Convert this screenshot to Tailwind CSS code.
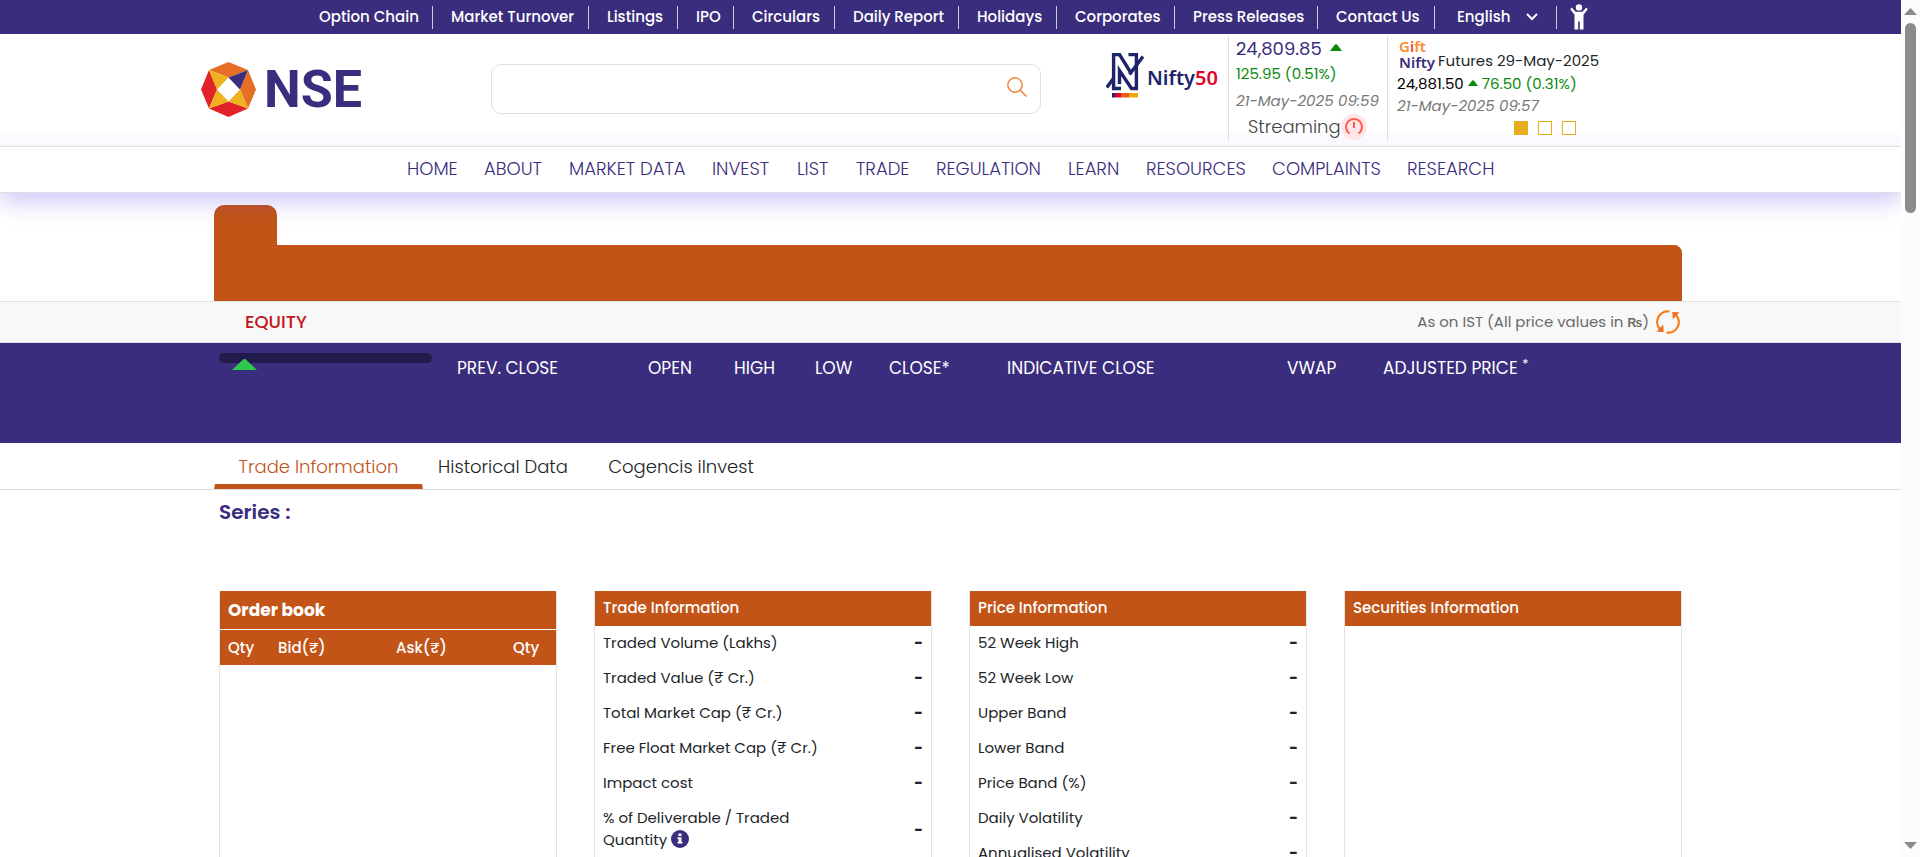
<!DOCTYPE html>
<html lang="en">
<head>
<meta charset="utf-8">
<title>NSE - Equity Quote</title>
<script src="https://cdn.jsdelivr.net/npm/@tailwindcss/browser@4"></script>
</head>
<body class="flex h-screen overflow-hidden bg-white font-['Poppins','Inter','Noto_Sans',sans-serif] text-[15px] text-[#212529]">

<div class="flex min-w-0 flex-1 flex-col overflow-hidden">

  <!-- Utility bar -->
  <div class="flex h-[34px] shrink-0 items-center bg-[#3a2d7d] pl-[319px] font-medium text-white">
    <nav aria-label="Quick links" class="grid grid-cols-[132px_156px_89px_56px_101px_124px_98px_118px_143px_117px] whitespace-nowrap leading-[22px]">
      <a href="#" class="mr-[18px] border-r border-[#d0cde0] pb-px">Option Chain</a>
      <a href="#" class="mr-[18px] border-r border-[#d0cde0] pb-px">Market Turnover</a>
      <a href="#" class="mr-[18px] border-r border-[#d0cde0] pb-px">Listings</a>
      <a href="#" class="mr-[18px] border-r border-[#d0cde0] pb-px">IPO</a>
      <a href="#" class="mr-[18px] border-r border-[#d0cde0] pb-px">Circulars</a>
      <a href="#" class="mr-[18px] border-r border-[#d0cde0] pb-px">Daily Report</a>
      <a href="#" class="mr-[18px] border-r border-[#d0cde0] pb-px">Holidays</a>
      <a href="#" class="mr-[18px] border-r border-[#d0cde0] pb-px">Corporates</a>
      <a href="#" class="mr-[18px] border-r border-[#d0cde0] pb-px">Press Releases</a>
      <a href="#" class="mr-[18px] border-r border-[#d0cde0] pb-px">Contact Us</a>
    </nav>
    <div class="ml-1 flex h-[23px] w-[100px] items-center border-r border-[#d0cde0]">
      <select aria-label="Language" class="w-[69px] appearance-none bg-transparent pb-px leading-[22px] text-white"><option>English</option></select>
      <svg class="pointer-events-none" width="12" height="8" viewBox="0 0 12 8" fill="none" stroke="#fff" stroke-width="2"><path d="M1 1l5 5 5-5"/></svg>
    </div>
    <button aria-label="Accessibility" class="ml-[13px]">
      <svg width="18" height="26" viewBox="0 0 18 26" fill="#fff"><circle cx="9" cy="3.400" r="3.200"/><path d="M1.600 3.600l4 4.200h6.800l4-4.200 1.300 1.600-4.200 5.600v14.800H9.800v-8H8.200v8H4.500V10.800L.3 5.200z"/></svg>
    </button>
  </div>

  <!-- Masthead -->
  <header class="relative shrink-0">
    <div class="relative z-10 flex h-28 items-start bg-gradient-to-b from-white from-85% to-[#f7f7fd] pl-[201px]">
      <a href="#" aria-label="NSE home" class="mt-7 flex w-[290px] items-center gap-2">
        <svg width="55" height="55" viewBox="0 0 55 55">
          <path fill="#e66f25" d="M27.500 0L47 8 27.500 15.500 8 8z"/>
          <path fill="#e66f25" d="M47 8l8 19.500L47 46.500l-8-19z"/>
          <path fill="#e12229" d="M8 46.500L27.500 39.500 47 46.500 27.500 55z"/>
          <path fill="#e12229" d="M8 8l8 19.500-8 19L0 27.500z"/>
          <path fill="#efb11f" d="M8 8l19.500 7.500L16 27.500z"/>
          <path fill="#efb11f" d="M16 27.500l11.500 12L8 46.500z"/>
          <path fill="#efb11f" d="M39 27.500l8 19-19.500-7z"/>
          <path fill="#3a2d7d" d="M47 8l-8 19.500-11.500-12z"/>
        </svg>
        <span class="font-['Roboto',sans-serif] text-[52px] font-bold leading-[55px] text-[#3a2d7d]">NSE</span>
      </a>

      <form role="search" class="mt-[30px] flex h-[50px] w-[550px] items-center rounded-[10px] border border-[#e0e0e0] bg-white">
        <input type="search" aria-label="Search" class="h-full min-w-0 flex-1 bg-transparent px-4 outline-none">
        <button type="button" aria-label="Search" class="mr-[13px] mb-1">
          <svg width="20" height="20" viewBox="0 0 20 20" fill="none" stroke="#ef7d33" stroke-width="1.400"><circle cx="8" cy="8" r="7.200"/><path d="M13.200 13.200l6.300 6.300"/></svg>
        </button>
      </form>

      <a href="#" class="ml-[65px] mt-[19px] flex w-[122px] gap-[3px]">
        <svg width="38" height="45" viewBox="0 0 38 45">
          <g fill="none" stroke="#20246b" stroke-width="3.400">
            <path d="M15 35.500H7.600V1.600H13.500L25 20"/>
            <path d="M22.500 1.600H30.400V35.500H25.500L13.500 17.500V31"/>
            <path d="M.8 34.500l7-9.500"/>
            <path d="M23.500 21.500L37 3.500"/>
          </g>
          <path fill="#20246b" d="M6 40h3v4.500H6z"/><path fill="#e2062c" d="M9 40h6v4.500H9z"/><path fill="#ea5b1c" d="M15 40h8v4.500h-8z"/><path fill="#f7a60a" d="M23 40h9v4.500h-9z"/>
        </svg>
        <span class="mt-[11px] font-['Noto_Sans',sans-serif] text-xl font-semibold text-[#20246b]">Nifty<span class="text-[#e2062c]">50</span></span>
      </a>

      <div class="mt-0.5 flex h-[104px] w-[160px] flex-col border-x border-[#dedede] pl-[7px]">
        <div class="flex items-center gap-2 text-lg leading-[26px] text-[#3a2d7d]">24,809.85
          <svg class="mb-1" width="12" height="7" viewBox="0 0 12 7" fill="#0a8a0a"><path d="M0 7L4.500 1q1.500-1.500 3 0L12 7z"/></svg>
        </div>
        <div class="text-[15px] leading-6 text-[#0a8a0a]">125.95 (0.51%)</div>
        <div class="mt-0.5 whitespace-nowrap text-[15px] leading-[26px] text-[#777] italic">21-May-2025 09:59</div>
        <div class="flex h-[26px] items-center pl-3 text-lg font-light text-[#444]">Streaming
          <button aria-label="Stop streaming">
            <svg width="26" height="26" viewBox="0 0 26 26"><circle cx="13" cy="13" r="13" fill="#ffe5e5"/><g fill="none" stroke="#fb5a50" stroke-width="2"><path d="M8.500 19.500a8 8 0 1 1 9 0"/><path d="M13 8v6"/></g></svg>
          </button>
        </div>
      </div>

      <div class="mt-1 pl-[9px] whitespace-nowrap">
        <div class="flex items-end gap-[3px] pl-0.5">
          <span class="font-['Noto_Sans',sans-serif] text-[15px] leading-4 font-semibold"><span class="block text-[#fb8c2d]">G<span class="text-[#ef4c2f]">i</span>ft</span><span class="block text-[#3a2d7d]">Nifty</span></span>
          <span class="text-[15px] leading-[18px]">Futures 29-May-2025</span>
        </div>
        <div class="mt-[3px] flex items-center gap-1 text-[15px] leading-[22px] text-black">24,881.50
          <svg class="mb-0.5" width="10" height="6" viewBox="0 0 12 7" fill="#0a8a0a"><path d="M0 7L4.500 1q1.500-1.500 3 0L12 7z"/></svg>
          <span class="text-[#0a8a0a]">76.50 (0.31%)</span>
        </div>
        <div class="text-[15px] leading-[22px] text-[#777] italic">21-May-2025 09:57</div>
        <div class="mt-1 flex gap-2.5 pl-[117px]">
          <button aria-label="Slide 1" class="size-3.5 border border-[#e8ad1e] bg-[#e8ad1e]"></button>
          <button aria-label="Slide 2" class="size-3.5 border border-[#e8ad1e]"></button>
          <button aria-label="Slide 3" class="size-3.5 border border-[#e8ad1e]"></button>
        </div>
      </div>
    </div>

    <nav aria-label="Main" class="grid grid-cols-[77px_85px_143px_85px_59px_80px_132px_78px_126px_135px_auto] border-y border-[#dedee4] bg-white pb-[2px] pl-[407px] text-lg leading-[43px] font-light whitespace-nowrap text-[#3a2d7d] shadow-[0_8px_25px_rgba(87,60,230,0.3)]">
      <a href="#">HOME</a><a href="#">ABOUT</a><a href="#">MARKET DATA</a><a href="#">INVEST</a><a href="#">LIST</a><a href="#">TRADE</a><a href="#">REGULATION</a><a href="#">LEARN</a><a href="#">RESOURCES</a><a href="#">COMPLAINTS</a><a href="#">RESEARCH</a>
    </nav>
  </header>

  <main class="shrink-0">
    <!-- Quote folder -->
    <div class="pt-3 pr-[219px] pl-[214px]">
      <div class="h-10 w-[63px] rounded-t-[10px] bg-[#c25417]"></div>
      <div class="h-14 rounded-tr-[8px] bg-[#c25417]"></div>
    </div>

    <div class="flex h-[42px] items-center border-y border-[#e2e2e2] bg-[#f8f8f8] pr-[221px] pl-[245px]">
      <h1 class="flex-1 text-lg font-medium text-[#c4161c]">EQUITY</h1>
      <span class="text-[15px] text-[#6a6a6a]">As on IST (All price values in <span class="font-['Liberation_Sans',sans-serif] text-xs font-bold">₨</span>)</span>
      <button aria-label="Refresh" class="ml-[7px]">
        <svg width="24" height="24" viewBox="0 0 24 24"><g fill="none" stroke="#fb7a12" stroke-width="2.200"><path d="M13.500 1.500A10.500 10.500 0 0 0 4.500 19.500"/><path d="M10.500 22.500A10.500 10.500 0 0 0 19.500 4.500"/></g><path fill="#f07020" d="M.5 21.800L7.700 22 7.200 14.500z"/><path fill="#f07020" d="M23.500 2.200L16.300 2l.5 7.500z"/></svg>
      </button>
    </div>

    <div class="flex h-[100px] items-start bg-[#3a2d7d] pt-2.5 pl-[219px]">
      <div class="w-[238px]">
        <div class="h-2.5 w-[213px] rounded-full bg-[#231a4c]">
          <svg class="relative top-1.5 left-[13px]" width="25" height="11" viewBox="0 0 25 11" fill="#2dc84d"><path d="M0 11L10.500 1q2-2 4 0L25 11z"/></svg>
        </div>
      </div>
      <table class="table-fixed text-left text-[17px] leading-[30px] whitespace-nowrap text-white">
        <colgroup><col class="w-[191px]"><col class="w-[86px]"><col class="w-[81px]"><col class="w-[74px]"><col class="w-[118px]"><col class="w-[280px]"><col class="w-[96px]"><col class="w-[180px]"></colgroup>
        <thead><tr>
          <th class="font-normal">PREV. CLOSE</th><th class="font-normal">OPEN</th><th class="font-normal">HIGH</th><th class="font-normal">LOW</th><th class="font-normal">CLOSE*</th><th class="font-normal">INDICATIVE CLOSE</th><th class="font-normal">VWAP</th><th class="font-normal">ADJUSTED PRICE <sup>*</sup></th>
        </tr></thead>
      </table>
    </div>

    <div role="tablist" class="flex h-[47px] items-stretch border-b border-[#dedede] pl-[214px] text-lg font-light text-[#222]">
      <button role="tab" aria-selected="true" class="flex w-[209px] flex-col items-center text-[#c25417]">
        <span class="flex-1 pt-3 leading-6">Trade Information</span>
        <svg class="h-[5px] w-full" viewBox="0 0 209 5" preserveAspectRatio="none" fill="#c25417"><path d="M1 0H208L209 5H0z"/></svg>
      </button>
      <button role="tab" aria-selected="false" class="flex w-[160px] justify-center pt-3 leading-6">Historical Data</button>
      <button role="tab" aria-selected="false" class="flex w-[196px] justify-center pt-3 leading-6">Cogencis iInvest</button>
    </div>

    <h2 class="pt-[7px] pl-[219px] text-xl leading-[30px] font-semibold text-[#3a2d7d]">Series :</h2>

    <div class="mt-16 grid grid-cols-4 gap-[37px] pr-[219px] pl-[219px]">
      <section class="min-h-[340px] rounded-t border border-t-0 border-[#e2e2e2]">
        <h3 class="border-b border-white bg-[#c25417] px-2 text-[17px] leading-[38px] font-bold text-white">Order book</h3>
        <table class="w-full table-fixed bg-[#c25417] text-left leading-[35px] text-white">
          <colgroup><col class="w-[50px]"><col class="w-[118px]"><col class="w-[117px]"><col></colgroup>
          <thead><tr><th class="pl-2 font-medium">Qty</th><th class="pl-2 font-medium">Bid(₹)</th><th class="pl-2 font-medium">Ask(₹)</th><th class="pl-2 font-medium">Qty</th></tr></thead>
        </table>
      </section>

      <section class="border border-t-0 border-[#e2e2e2]">
        <h3 class="bg-[#c25417] px-2 pb-px leading-[34px] font-medium text-white">Trade Information</h3>
        <table class="w-full text-left leading-[22px]">
          <tbody>
            <tr class="h-[35px]"><th class="w-[230px] pb-0.5 pl-2 font-normal">Traded Volume (Lakhs)</th><td class="pr-2 pb-0.5 text-right font-bold">-</td></tr>
            <tr class="h-[35px]"><th class="pb-0.5 pl-2 font-normal">Traded Value (₹ Cr.)</th><td class="pr-2 pb-0.5 text-right font-bold">-</td></tr>
            <tr class="h-[35px]"><th class="pb-0.5 pl-2 font-normal">Total Market Cap (₹ Cr.)</th><td class="pr-2 pb-0.5 text-right font-bold">-</td></tr>
            <tr class="h-[35px]"><th class="pb-0.5 pl-2 font-normal">Free Float Market Cap (₹ Cr.)</th><td class="pr-2 pb-0.5 text-right font-bold">-</td></tr>
            <tr class="h-[35px]"><th class="pb-0.5 pl-2 font-normal">Impact cost</th><td class="pr-2 pb-0.5 text-right font-bold">-</td></tr>
            <tr class="h-[57px]"><th class="pl-2 font-normal">% of Deliverable / Traded Quantity <svg class="mb-1 inline-block" width="18" height="18" viewBox="0 0 18 18"><circle cx="9" cy="9" r="9" fill="#3a2d7d"/><path fill="#fff" d="M7.500 3.500h3v2.600h-3zM6.500 7.300h4v4.700h1v1.600h-5V12h1V8.900h-1z"/></svg></th><td class="pr-2 text-right font-bold">-</td></tr>
          </tbody>
        </table>
      </section>

      <section class="border border-t-0 border-[#e2e2e2]">
        <h3 class="bg-[#c25417] px-2 pb-px leading-[34px] font-medium text-white">Price Information</h3>
        <table class="w-full text-left leading-[22px]">
          <tbody>
            <tr class="h-[35px]"><th class="w-[230px] pb-0.5 pl-2 font-normal">52 Week High</th><td class="pr-2 pb-0.5 text-right font-bold">-</td></tr>
            <tr class="h-[35px]"><th class="pb-0.5 pl-2 font-normal">52 Week Low</th><td class="pr-2 pb-0.5 text-right font-bold">-</td></tr>
            <tr class="h-[35px]"><th class="pb-0.5 pl-2 font-normal">Upper Band</th><td class="pr-2 pb-0.5 text-right font-bold">-</td></tr>
            <tr class="h-[35px]"><th class="pb-0.5 pl-2 font-normal">Lower Band</th><td class="pr-2 pb-0.5 text-right font-bold">-</td></tr>
            <tr class="h-[35px]"><th class="pb-0.5 pl-2 font-normal">Price Band (%)</th><td class="pr-2 pb-0.5 text-right font-bold">-</td></tr>
            <tr class="h-[35px]"><th class="pb-0.5 pl-2 font-normal">Daily Volatility</th><td class="pr-2 pb-0.5 text-right font-bold">-</td></tr>
            <tr class="h-[35px]"><th class="pb-0.5 pl-2 font-normal">Annualised Volatility</th><td class="pr-2 pb-0.5 text-right font-bold">-</td></tr>
          </tbody>
        </table>
      </section>

      <section class="border border-t-0 border-[#e2e2e2]">
        <h3 class="bg-[#c25417] px-2 pb-px leading-[34px] font-medium text-white">Securities Information</h3>
      </section>
    </div>
  </main>
</div>

<!-- Scroll track -->
<div aria-hidden="true" class="flex w-[19px] shrink-0 flex-col items-center bg-[#fcfcfc] pt-2 pb-2">
  <svg width="13" height="7" viewBox="0 0 13 7" fill="#8b8b8b"><path d="M0 7L6.500 0 13 7z"/></svg>
  <div class="mt-2 h-[190px] w-[11px] rounded-full bg-[#8b8b8b]"></div>
  <svg class="mt-auto" width="13" height="7" viewBox="0 0 13 7" fill="#8b8b8b"><path d="M0 0L6.500 7 13 0z"/></svg>
</div>
</body>
</html>
